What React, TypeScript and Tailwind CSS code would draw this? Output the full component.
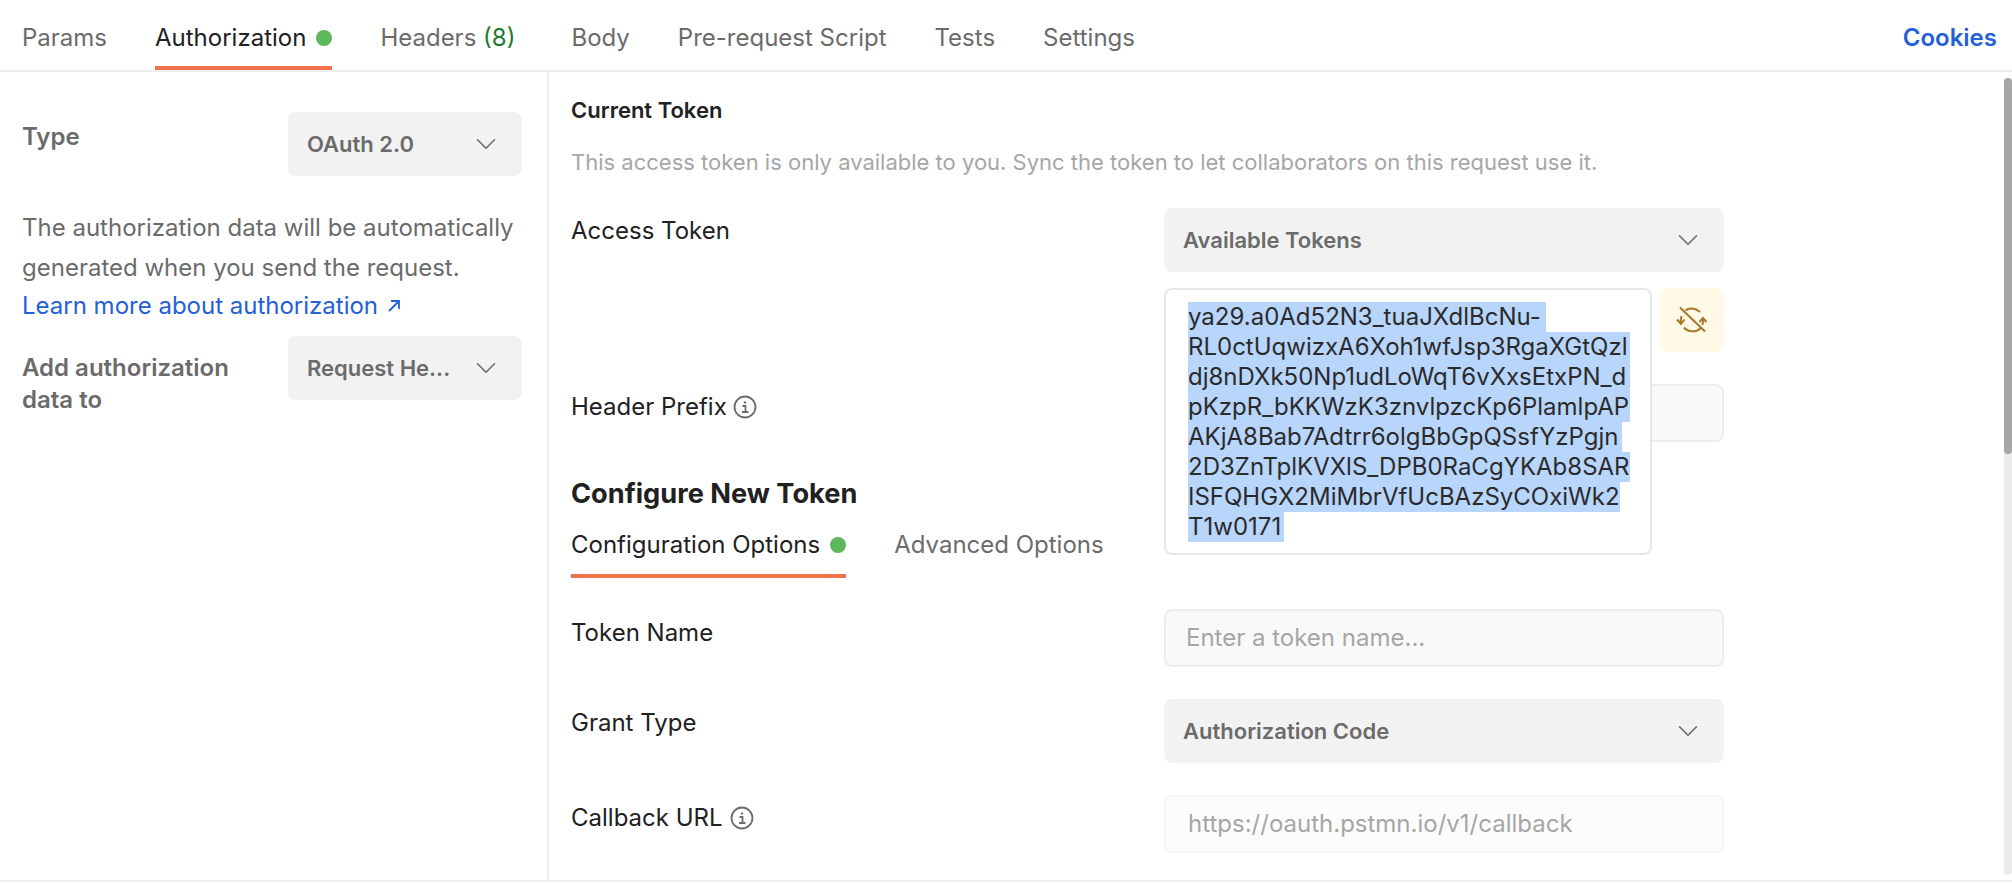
import { ChevronDown } from "lucide-react";

function SelectBox({ label, className }: { label: string; className: string }) {
  return (
    <div className={"flex h-16 items-center justify-between rounded-lg bg-[#f2f2f2] pl-[19px] pr-[19px] " + className}>
      <span className="text-[22px] font-semibold text-[#6b6b6b]">{label}</span>
      <ChevronDown className="h-[34px] w-[34px] text-[#6b6b6b]" strokeWidth={1.1} />
    </div>
  );
}

function InfoIcon() {
  return (
    <svg width="24" height="24" viewBox="0 0 24 24" fill="none" stroke="#6b6b6b" strokeWidth="1.8">
      <circle cx="12" cy="12" r="10.5" />
      <path d="M9.5 11h3v6M9 17h6.5" />
      <path d="M12 6.5v2" strokeWidth="2.2" />
    </svg>
  );
}

function SyncOffIcon() {
  return (
    <svg width="44" height="50" viewBox="0 0 44 50" fill="none" stroke="#a8782a" strokeWidth="2">
      <path d="M10 12.500L35 36.500" />
      <path d="M15.500 15.500C19 12.500 25 12.500 30 17" />
      <path d="M14 32.500C18 37 26 38 31 33" />
      <path d="M11 28C10.500 25 11 23 11.500 21M7 24.500L11 29L14.500 24.500" />
      <path d="M33 24C33.500 26 33 28 32.500 30M29.500 27L33 23L36.500 27" />
    </svg>
  );
}

const token = [
  { text: "ya29.a0Ad52N3_tuaJXdlBcNu-", width: "w-[358px]" },
  { text: "RL0ctUqwizxA6Xoh1wfJsp3RgaXGtQzl", width: "w-[442px]" },
  { text: "dj8nDXk50Np1udLoWqT6vXxsEtxPN_d", width: "w-[442px]" },
  { text: "pKzpR_bKKWzK3znvlpzcKp6PlamlpAP", width: "w-[442px]" },
  { text: "AKjA8Bab7Adtrr6olgBbGpQSsfYzPgjn", width: "w-[434px]" },
  { text: "2D3ZnTplKVXlS_DPB0RaCgYKAb8SAR", width: "w-[442px]" },
  { text: "ISFQHGX2MiMbrVfUcBAzSyCOxiWk2", width: "w-[432px]" },
  { text: "T1w0171", width: "w-[96px]" },
];

export default function App() {
  return (
    <div className="h-[886px] w-[2012px] overflow-hidden bg-white text-[#212121]" style={{ fontFamily: "Inter, sans-serif" }}>
      <div className="flex h-[72px] items-start border-b-2 border-[#ededed] pl-[22px] pr-[15px] text-[24px]">
        <div className="flex h-[70px] items-center pt-[6px] text-[#6b6b6b]">Params</div>
        <div className="ml-[48px] flex h-[70px] items-center gap-[10px] border-b-4 border-[#f0734a] pt-[10px]">
          Authorization
          <span className="h-4 w-4 rounded-full bg-[#5cb85c]" />
        </div>
        <div className="ml-[48px] flex h-[70px] items-center pt-[6px] text-[#6b6b6b]">
          Headers&nbsp;<span className="text-[#1f7a2e]">(8)</span>
        </div>
        <div className="ml-[56px] flex h-[70px] items-center pt-[6px] text-[#6b6b6b]">Body</div>
        <div className="ml-[48px] flex h-[70px] items-center pt-[6px] text-[#6b6b6b]">Pre-request Script</div>
        <div className="ml-[48px] flex h-[70px] items-center pt-[6px] text-[#6b6b6b]">Tests</div>
        <div className="ml-[48px] flex h-[70px] items-center pt-[6px] text-[#6b6b6b]">Settings</div>
        <div className="ml-auto flex h-[70px] items-center pt-[6px] font-semibold text-[#2460d6]">Cookies</div>
      </div>

      <div className="flex h-[810px] border-b-2 border-[#ededed]">
        <div className="w-[549px] shrink-0 border-r-2 border-[#ededed] pl-[22px] pr-[25px] pt-10">
          <div className="flex items-start justify-between">
            <span className="mt-[7px] text-[24px] font-semibold text-[#6b6b6b]">Type</span>
            <SelectBox label="OAuth 2.0" className="w-[234px]" />
          </div>
          <p className="mt-[32px] text-[24px] leading-[40px] text-[#6b6b6b]">
            The authorization data will be automatically generated when you send the request.
          </p>
          <a className="flex items-center gap-2 text-[24px] leading-[36px] text-[#2460d6]">
            Learn more about authorization
            <svg width="16" height="16" viewBox="0 0 16 16" fill="none" stroke="#2460d6" strokeWidth="1.8">
              <path d="M3 13L13 3M5 3h8v8" />
            </svg>
          </a>
          <div className="mt-[12px] flex items-start justify-between">
            <span className="mt-4 w-[240px] text-[24px] font-semibold leading-8 text-[#6b6b6b]">Add authorization data to</span>
            <SelectBox label="Request He..." className="w-[234px]" />
          </div>
        </div>

        <div className="relative flex-1 overflow-hidden pl-[22px] pt-[24px]">
          <div className="text-[22px] font-semibold leading-7">Current Token</div>
          <div className="mt-[24px] text-[22px] leading-7 text-[#a6a6a6]">
            This access token is only available to you. Sync the token to let collaborators on this request use it.
          </div>

          <div className="mt-[32px] grid grid-cols-[593px_560px]">
            <div className="pt-[7px] text-[24px] leading-8">Access Token</div>
            <div className="relative">
              <SelectBox label="Available Tokens" className="w-[560px]" />
              <div className="absolute left-0 top-20 z-10 h-[267px] w-[488px] rounded-lg border-2 border-[#e6e6e6] bg-white pl-[22px] pt-3 text-[24px] leading-[30px] text-[#2b2b2b]">
                {token.map((line) => (
                  <div key={line.text} className={"whitespace-nowrap bg-[#b8d5fc] " + line.width}>{line.text}</div>
                ))}
              </div>
              <div className="absolute right-0 top-20 flex h-16 w-16 items-center justify-center rounded-lg bg-[#fff9e6]">
                <SyncOffIcon />
              </div>
            </div>
          </div>

          <div className="mt-[112px] grid grid-cols-[593px_560px]">
            <div className="flex h-[46px] items-center gap-[6px] text-[24px]">Header Prefix <InfoIcon /></div>
            <div className="h-[58px] rounded-lg border-2 border-[#ededed] bg-[#f9f9f9]" />
          </div>

          <div className="mt-[34px] text-[27.2px] font-bold leading-9">Configure New Token</div>
          <div className="mt-4 flex text-[24px]">
            <div className="flex h-[50px] items-start gap-[10px] border-b-4 border-[#f0734a] pt-[3px] leading-7">
              Configuration Options
              <span className="mt-[6px] h-4 w-4 rounded-full bg-[#5cb85c]" />
            </div>
            <div className="ml-[48px] pt-[3px] leading-7 text-[#6b6b6b]">Advanced Options</div>
          </div>

          <div className="mt-[31px] grid grid-cols-[593px_560px]">
            <div className="pt-2 text-[24px] leading-8">Token Name</div>
            <div className="flex h-[58px] items-center rounded-lg border-2 border-[#ededed] bg-[#f9f9f9] pl-[20px] text-[24px] text-[#a6a6a6]">Enter a token name...</div>
          </div>
          <div className="mt-8 grid grid-cols-[593px_560px]">
            <div className="pt-2 text-[24px] leading-8">Grant Type</div>
            <SelectBox label="Authorization Code" className="w-[560px]" />
          </div>
          <div className="mt-8 grid grid-cols-[593px_560px]">
            <div className="flex h-[46px] items-center gap-[7px] text-[24px]">Callback URL <InfoIcon /></div>
            <div className="flex h-[58px] items-center rounded-lg border-2 border-[#f5f5f5] bg-[#fcfcfc] pl-[22px] text-[24px] text-[#a6a6a6]">https://oauth.pstmn.io/v1/callback</div>
          </div>

          <div className="absolute bottom-[5px] right-0 top-[6px] w-2 rounded-sm bg-[#ebebeb]">
            <div className="h-[376px] rounded-sm bg-[#a6a6a6]" />
          </div>
        </div>
      </div>
    </div>
  );
}
